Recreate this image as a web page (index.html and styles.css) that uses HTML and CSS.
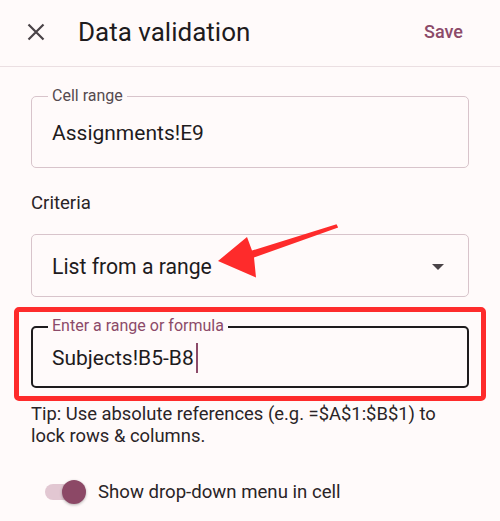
FILE: index.html
```html
<!DOCTYPE html>
<html>
<head>
<meta charset="utf-8">
<link rel="stylesheet" href="styles.css">
</head>
<body>
<div class="page">
  <header class="topbar">
    <svg class="close" width="18" height="18" viewBox="0 0 18 18"><path d="M1.5 1.5 L16.5 16.5 M16.5 1.5 L1.5 16.5" stroke="#4a4347" stroke-width="2.2" fill="none"/></svg>
    <h1 class="title">Data validation</h1>
    <span class="save">Save</span>
  </header>
  <main class="content">
    <div class="field field-range">
      <span class="float-label">Cell range</span>
      <span class="value">Assignments!E9</span>
    </div>
    <div class="section-label">Criteria</div>
    <div class="field field-select">
      <span class="value">List from a range</span>
      <span class="caret"></span>
    </div>
    <div class="highlight">
      <div class="field field-focus">
        <span class="float-label focus-label">Enter a range or formula</span>
        <span class="value">Subjects!B5-B8</span><span class="cursor"></span>
      </div>
    </div>
    <p class="tip">Tip: Use absolute references (e.g. =$A$1:$B$1) to lock rows &amp; columns.</p>
    <div class="toggle-row">
      <span class="track"><span class="thumb"></span></span>
      <span class="toggle-label">Show drop-down menu in cell</span>
    </div>
  </main>
  <svg class="arrow" width="500" height="521" viewBox="0 0 500 521">
    <polygon points="336.5,224.3 252,250.5 247,237 218,261 256,277.5 254,257.5 338.2,227.6" fill="#fe2b2b"/>
  </svg>
</div>
</body>
</html>
```

FILE: styles.css
```css
* { box-sizing: border-box; }
html, body { margin: 0; padding: 0; }
body {
  background: #fffafa;
  font-family: Roboto, "Noto Sans", "Liberation Sans", sans-serif;
  color: #1e1b1d;
}
.page {
  position: relative;
  width: 500px;
  height: 521px;
  overflow: hidden;
}
.topbar {
  height: 67px;
  display: flex;
  align-items: center;
  padding: 0 37px 0 27px;
  border-bottom: 1px solid #ebdfe2;
}
.close { display: block; margin-top: -2px; }
.title {
  margin: 0 0 0 33px;
  font-size: 26px;
  font-weight: 400;
  color: #1e1b1d;
  flex: 1;
  margin-top: -3px;
}
.save {
  font-size: 18px;
  font-weight: 500;
  color: #8c4a69;
  margin-top: -4px;
}
.content {
  padding: 0 31px;
}
.field {
  position: relative;
  display: flex;
  align-items: center;
  border: 1px solid #d8c4cb;
  border-radius: 5px;
  padding-left: 20px;
}
.field-range {
  margin-top: 29px;
  height: 72px;
}
.value {
  font-size: 21px;
  color: #1e1b1d;
}
.field-range .value { margin-top: 2px; }
.float-label {
  position: absolute;
  left: 16px;
  top: -12px;
  padding: 0 4px;
  background: #fffafa;
  font-size: 16px;
  line-height: 22px;
  color: #554a4f;
}
.section-label {
  margin-top: 24px;
  font-size: 18.6px;
  line-height: 22px;
  color: #2a2427;
}
.field-select {
  margin-top: 20px;
  height: 63px;
  justify-content: space-between;
  padding-right: 24px;
}
.field-select .value { margin-top: 1px; font-size: 21.2px; }
.caret {
  width: 0;
  height: 0;
  border-left: 6px solid transparent;
  border-right: 6px solid transparent;
  border-top: 6px solid #4a4347;
  margin-top: 2px;
}
.highlight {
  margin: 10px -17px 0 -17px;
  border: 5px solid #fe2b2b;
  border-radius: 5px;
  padding: 14px 12px 8px 12px;
}
.field-focus {
  height: 62px;
  border: 2px solid #1e1b1d;
  padding-left: 19px;
}
.focus-label {
  top: -13px;
  left: 15px;
  color: #8c4a69;
}
.field-focus .value { margin-top: 2px; }
.cursor {
  display: inline-block;
  width: 2px;
  height: 30px;
  background: #8c4a69;
  margin-left: 2px;
  margin-top: 2px;
}
.tip {
  margin: 2px 0 0 0;
  font-size: 18.4px;
  line-height: 22px;
  color: #2a2427;
}
.toggle-row {
  margin-top: 32px;
  display: flex;
  align-items: center;
  padding-left: 14px;
  height: 26px;
}
.track {
  position: relative;
  display: block;
  width: 37px;
  height: 16px;
  border-radius: 8px;
  background: #e2c7d2;
}
.thumb {
  position: absolute;
  left: 17px;
  top: -4px;
  width: 24px;
  height: 24px;
  border-radius: 50%;
  background: #8c4866;
  box-shadow: 0 1px 3px rgba(0,0,0,0.3);
}
.toggle-label {
  margin-left: 16px;
  font-size: 18.6px;
  color: #2a2427;
}
.arrow {
  position: absolute;
  left: 0;
  top: 0;
  pointer-events: none;
}
```
